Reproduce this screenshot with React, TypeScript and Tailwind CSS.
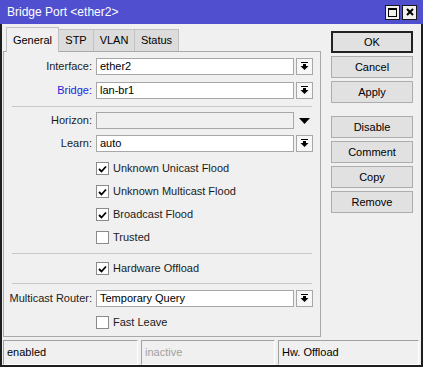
import React from 'react';

const font = { fontFamily: '"Liberation Sans", Arial, sans-serif' };

function DropIcon() {
  return (
    <svg width="9" height="9" viewBox="0 0 9 9" className="block">
      <rect x="1" y="0" width="7" height="1" fill="#000" />
      <rect x="3" y="2" width="3" height="2" fill="#000" />
      <polygon points="0.5,4 8.5,4 4.5,8" fill="#000" />
    </svg>
  );
}

function Combo({ value, disabled, plain }: { value: string; disabled?: boolean; plain?: boolean }) {
  return (
    <div className="flex items-center gap-[2px]">
      <div
        className={`w-[198px] h-[17px] border border-[#a7a7a7] flex items-center pl-[3px] text-[11px] text-black ${
          disabled ? 'bg-[#f0f0f0]' : 'bg-white'
        }`}
      >
        {value}
      </div>
      {plain ? (
        <div className="w-[17px] h-[17px] flex items-center justify-center">
          <svg width="11" height="6" viewBox="0 0 11 6">
            <polygon points="0,0 11,0 5.5,6" fill="#000" />
          </svg>
        </div>
      ) : (
        <div className="w-[17px] h-[17px] border border-[#a7a7a7] bg-[#f7f7f7] flex items-center justify-center">
          <DropIcon />
        </div>
      )}
    </div>
  );
}

function Row({ label, children, blue }: { label: string; children: React.ReactNode; blue?: boolean }) {
  return (
    <div className="flex items-center h-[17px]">
      <div className={`w-[88px] text-right text-[11px] ${blue ? 'text-[#2323e0]' : 'text-[#1b1b1b]'}`}>{label}</div>
      <div className="ml-[4px]">{children}</div>
    </div>
  );
}

function Check({ label, checked }: { label: string; checked?: boolean }) {
  return (
    <div className="flex items-center h-[23px] pl-[92px]">
      <div className="w-[13px] h-[13px] border border-[#8a8a8a] bg-white flex items-center justify-center">
        {checked && (
          <svg width="9" height="8" viewBox="0 0 9 8">
            <polyline points="1,4 3.5,6.5 8,1.5" fill="none" stroke="#000" strokeWidth="1.8" />
          </svg>
        )}
      </div>
      <span className="ml-[4px] text-[11px] text-[#1b1b1b]">{label}</span>
    </div>
  );
}

function Sep() {
  return <div className="mx-[8px] h-[1px] bg-[#c8c8c8]" />;
}

function Btn({ label, def }: { label: string; def?: boolean }) {
  return (
    <div
      className={`w-[82px] h-[22px] flex items-center justify-center text-[11px] text-black bg-[#e1e1e1] ${
        def ? 'border-2 border-[#222]' : 'border border-[#adadad]'
      }`}
    >
      {label}
    </div>
  );
}

export default function App() {
  const tabs = ['STP', 'VLAN', 'Status'];
  return (
    <div style={font} className="w-[423px] h-[367px] bg-[#4f4fd0] flex flex-col">
      <div className="h-[24px] flex items-center justify-between pl-[7px] pr-[6px]">
        <span className="text-white text-[12px]">Bridge Port &lt;ether2&gt;</span>
        <div className="flex gap-[2px]">
          <div className="w-[15px] h-[15px] bg-[#f0f0f0] border border-[#1a1a1a] flex items-center justify-center">
            <div className="w-[9px] h-[9px] border border-black border-t-2" />
          </div>
          <div className="w-[15px] h-[15px] bg-[#f0f0f0] border border-[#1a1a1a] flex items-center justify-center">
            <svg width="8" height="8" viewBox="0 0 8 8">
              <path d="M1 1 L7 7 M7 1 L1 7" stroke="#000" strokeWidth="2" />
            </svg>
          </div>
        </div>
      </div>

      <div className="flex-1 bg-[#f0f0f0] border-x-2 border-b-2 border-[#1e1e1e] flex flex-col">
        <div className="flex">
          <div className="w-[318px] ml-[1px] flex flex-col">
            <div className="flex items-end h-[27px] pl-[3px]">
              <div className="h-[25px] w-[53px] border border-b-0 border-[#c2c2c2] bg-[#f0f0f0] flex items-center justify-center text-[11px] text-black relative top-[1px]">
                General
              </div>
              {tabs.map((t) => (
                <div
                  key={t}
                  className={`h-[22px] border border-b-0 border-l-0 border-[#c2c2c2] bg-[#dcdcdc] flex items-center justify-center text-[11px] text-black ${
                    t === 'STP' ? 'w-[35px]' : t === 'VLAN' ? 'w-[41px]' : 'w-[44px]'
                  }`}
                >
                  {t}
                </div>
              ))}
            </div>
            <div className="h-[286px] border border-[#a9a9a9] flex flex-col pt-[6px]">
              <Row label="Interface:">
                <Combo value="ether2" />
              </Row>
              <div className="mt-[7px]">
                <Row label="Bridge:" blue>
                  <Combo value="lan-br1" />
                </Row>
              </div>
              <div className="mt-[7px]">
                <Sep />
              </div>
              <div className="mt-[5px]">
                <Row label="Horizon:">
                  <Combo value="" disabled plain />
                </Row>
              </div>
              <div className="mt-[6px]">
                <Row label="Learn:">
                  <Combo value="auto" />
                </Row>
              </div>
              <div className="mt-[5px]">
                <Check label="Unknown Unicast Flood" checked />
                <Check label="Unknown Multicast Flood" checked />
                <Check label="Broadcast Flood" checked />
                <Check label="Trusted" />
              </div>
              <div className="mt-[4px]">
                <Sep />
              </div>
              <div className="mt-[3px]">
                <Check label="Hardware Offload" checked />
              </div>
              <div className="mt-[3px]">
                <Sep />
              </div>
              <div className="mt-[6px]">
                <Row label="Multicast Router:">
                  <Combo value="Temporary Query" />
                </Row>
              </div>
              <div className="mt-[4px]">
                <Check label="Fast Leave" />
              </div>
            </div>
          </div>
          <div className="ml-[10px] pt-[7px] flex flex-col gap-[3px]">
            <Btn label="OK" def />
            <Btn label="Cancel" />
            <Btn label="Apply" />
            <div className="h-[7px]" />
            <Btn label="Disable" />
            <Btn label="Comment" />
            <Btn label="Copy" />
            <Btn label="Remove" />
          </div>
        </div>
        <div className="mt-[3px] flex gap-[3px] pl-[1px] pr-[2px]">
          <div className="w-[135px] h-[25px] border border-[#a0a0a0] border-b-white border-r-white flex items-center pl-[3px] text-[11px] text-black">
            enabled
          </div>
          <div className="w-[134px] h-[25px] border border-[#a0a0a0] border-b-white border-r-white flex items-center pl-[3px] text-[11px] text-[#a0a0a0]">
            inactive
          </div>
          <div className="flex-1 h-[25px] border border-[#a0a0a0] border-b-white border-r-white flex items-center pl-[3px] text-[11px] text-black">
            Hw. Offload
          </div>
        </div>
      </div>
    </div>
  );
}
